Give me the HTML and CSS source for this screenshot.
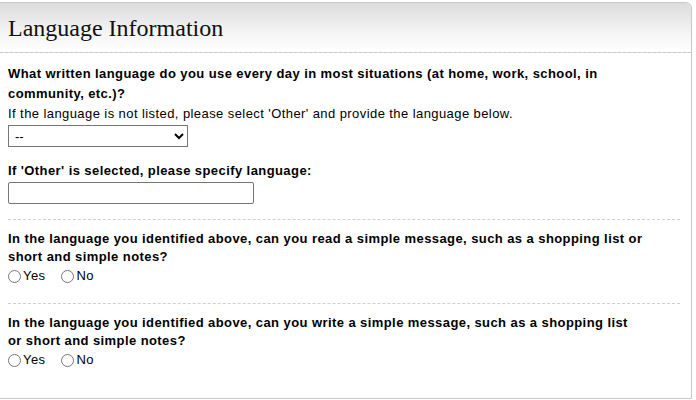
FILE: index.html
```html
<!DOCTYPE html>
<html>
<head>
<meta charset="utf-8">
<link rel="stylesheet" href="styles.css">
</head>
<body>
<div class="panel">
  <div class="panel-header">
    <h2 class="panel-title">Language Information</h2>
  </div>
  <div class="panel-body">
    <div class="section first">
      <div class="question q-tall">What written language do you use every day in most situations (at home, work, school, in community, etc.)?</div>
      <div class="hint">If the language is not listed, please select 'Other' and provide the language below.</div>
      <select class="lang-select"><option>--</option></select>
      <div class="question q-other">If 'Other' is selected, please specify language:</div>
      <input type="text" class="text-input">
    </div>
    <div class="section">
      <div class="question">In the language you identified above, can you read a simple message, such as a shopping list or short and simple notes?</div>
      <div class="radios">
        <label class="radio-label"><input type="radio" name="read">Yes</label>
        <label class="radio-label"><input type="radio" name="read">No</label>
      </div>
    </div>
    <div class="section last">
      <div class="question">In the language you identified above, can you write a simple message, such as a shopping list or short and simple notes?</div>
      <div class="radios">
        <label class="radio-label"><input type="radio" name="write">Yes</label>
        <label class="radio-label"><input type="radio" name="write">No</label>
      </div>
    </div>
  </div>
</div>
</body>
</html>
```
FILE: styles.css
```css
html, body {
  margin: 0;
  padding: 0;
  background: #fff;
}
body {
  font-family: "Liberation Sans", Arial, sans-serif;
  font-size: 13px;
  color: #000;
  letter-spacing: 0.42px;
}
.panel {
  margin: 2px 0 0 -1px;
  width: 691px;
  height: 395px;
  border: 1px solid #c8c8c8;
  border-top-right-radius: 6px;
  overflow: hidden;
  box-sizing: content-box;
}
.panel-header {
  height: 49px;
  background: linear-gradient(#dcdcdc 0%, #f4f4f4 60%, #ffffff 100%);
  border-bottom: 1px dashed #c8c8c8;
  padding-left: 8px;
  display: flex;
  align-items: flex-start;
}
.panel-title {
  margin: 0;
  padding-top: 12px;
  font-family: "Liberation Serif", "Times New Roman", serif;
  font-weight: normal;
  font-size: 24px;
  line-height: 26px;
  letter-spacing: 0;
  color: #111;
}
.panel-body {
  padding: 0 11px 0 8px;
}
.section {
  border-bottom: 1px dashed #d0d0d0;
  padding: 10px 0 17px;
}
.section.first {
  padding-top: 11px;
  padding-bottom: 15px;
}
.section.last {
  border-bottom: none;
}
.question {
  font-weight: bold;
  line-height: 18px;
  max-width: 635px;
}
.q-tall {
  line-height: 20px;
}
.hint {
  line-height: 20px;
}
.lang-select {
  display: block;
  margin-top: 1px;
  width: 180px;
  height: 22px;
  font-family: "Liberation Sans", Arial, sans-serif;
  font-size: 13px;
  border: 1px solid #767676;
  border-radius: 0;
  background: #fff;
  color: #000;
  padding: 0 2px;
}
.q-other {
  margin-top: 15px;
}
.text-input {
  display: block;
  margin: 2px 0 0;
  width: 246px;
  height: 22px;
  box-sizing: border-box;
  border: 1px solid #767676;
  border-radius: 2px;
  padding: 0 3px;
  font-size: 13px;
}
.radios {
  display: flex;
  gap: 16px;
  line-height: 20px;
}
.radio-label {
  display: flex;
  align-items: center;
  gap: 2px;
}
.radio-label input {
  margin: 0;
  width: 13px;
  height: 13px;
}
```
